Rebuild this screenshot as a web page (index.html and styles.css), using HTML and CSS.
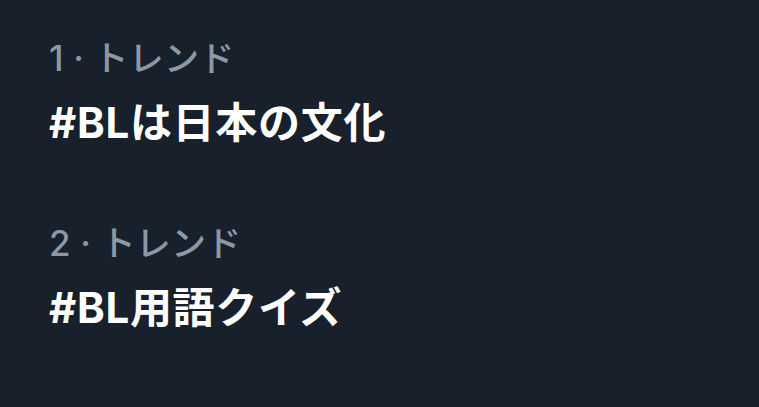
FILE: index.html
```html
<!DOCTYPE html>
<html>
<head>
<meta charset="UTF-8">
<title>トレンド</title>
<link rel="stylesheet" href="styles.css">
</head>
<body>
	<div class="trends">
		<div class="trend">
			<div class="meta">1 · トレンド</div>
			<div class="title">#BLは日本の文化</div>
		</div>
		<div class="trend">
			<div class="meta">2 · トレンド</div>
			<div class="title">#BL用語クイズ</div>
		</div>
	</div>
</body>
</html>
```

FILE: styles.css
```css
* {
	padding: 0;
	margin: 0;
}

html, body {
	height: 100%;
}

body {
	background-color: #17202b;
	font-family: Inter, "Noto Sans CJK JP", sans-serif;
}

.trends {
	padding: 38px 0 0 49px;
}

.trend {
	margin-bottom: 75px;
}

.meta {
	color: #8b98a5;
	font-size: 35px;
	font-weight: 500;
	line-height: 40px;
	letter-spacing: 0.2px;
}

.title {
	color: #ffffff;
	font-size: 42px;
	font-weight: 700;
	line-height: 50px;
	margin-top: 20px;
	letter-spacing: 0.7px;
}
```
